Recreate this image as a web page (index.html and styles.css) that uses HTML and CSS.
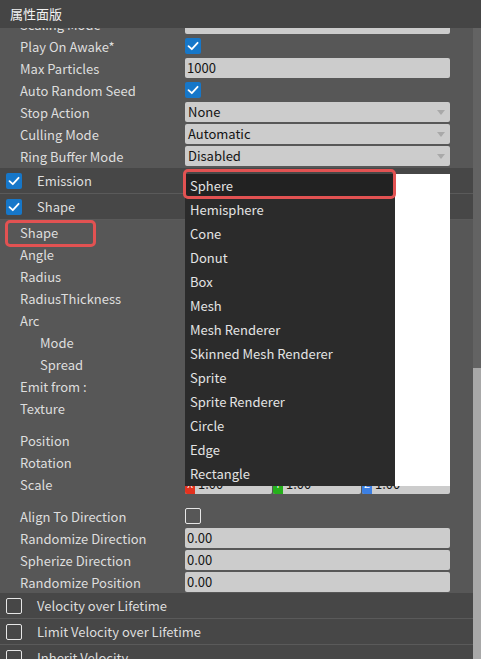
FILE: index.html
```html
<!DOCTYPE html>
<html lang="zh-CN">
<head>
<meta charset="utf-8">
<title>属性面版</title>
<link rel="stylesheet" href="styles.css">
</head>
<body>
<div class="window">
  <div class="titlebar">属性面版</div>
  <div class="viewport">
    <div class="content">
      <div class="scroll-inner">
        <div class="rows">
          <div class="row"><span class="label">Scaling Mode</span><div class="field select"></div></div>
          <div class="row"><span class="label">Play On Awake*</span><div class="value"><span class="check on"><svg viewBox="0 0 16 16"><path d="M3.5 8.2 L6.8 11.2 L12.6 4.8"/></svg></span></div></div>
          <div class="row"><span class="label">Max Particles</span><div class="field">1000</div></div>
          <div class="row"><span class="label">Auto Random Seed</span><div class="value"><span class="check on"><svg viewBox="0 0 16 16"><path d="M3.5 8.2 L6.8 11.2 L12.6 4.8"/></svg></span></div></div>
          <div class="row"><span class="label">Stop Action</span><div class="field select">None</div></div>
          <div class="row"><span class="label">Culling Mode</span><div class="field select">Automatic</div></div>
          <div class="row"><span class="label">Ring Buffer Mode</span><div class="field select">Disabled</div></div>
        </div>
        <div class="section-header"><span class="check on"><svg viewBox="0 0 16 16"><path d="M3.5 8.2 L6.8 11.2 L12.6 4.8"/></svg></span><span class="section-title">Emission</span></div>
        <div class="section-header"><span class="check on"><svg viewBox="0 0 16 16"><path d="M3.5 8.2 L6.8 11.2 L12.6 4.8"/></svg></span><span class="section-title">Shape</span></div>
        <div class="rows shape-rows">
          <div class="row"><span class="label">Shape</span><div class="field select"></div></div>
          <div class="row"><span class="label">Angle</span><div class="field"></div></div>
          <div class="row"><span class="label">Radius</span><div class="field"></div></div>
          <div class="row"><span class="label">RadiusThickness</span><div class="field"></div></div>
          <div class="row"><span class="label">Arc</span><div class="field"></div></div>
          <div class="row"><span class="label indent">Mode</span><div class="field select"></div></div>
          <div class="row"><span class="label indent">Spread</span><div class="field"></div></div>
          <div class="row"><span class="label">Emit from :</span><div class="field select"></div></div>
          <div class="row tall"><span class="label">Texture</span><div class="field"></div></div>
          <div class="group">
            <div class="row"><span class="label">Position</span><div class="vec"><div class="axis"><span class="tag x"></span><span class="num"></span></div><div class="axis"><span class="tag y"></span><span class="num"></span></div><div class="axis"><span class="tag z"></span><span class="num"></span></div></div></div>
            <div class="row"><span class="label">Rotation</span><div class="vec"><div class="axis"><span class="tag x"></span><span class="num"></span></div><div class="axis"><span class="tag y"></span><span class="num"></span></div><div class="axis"><span class="tag z"></span><span class="num"></span></div></div></div>
            <div class="row"><span class="label">Scale</span><div class="vec"><div class="axis"><span class="tag x">X</span><span class="num">1.00</span></div><div class="axis"><span class="tag y">Y</span><span class="num">1.00</span></div><div class="axis"><span class="tag z">Z</span><span class="num">1.00</span></div></div></div>
          </div>
          <div class="row"><span class="label">Align To Direction</span><div class="value"><span class="check off"></span></div></div>
          <div class="row"><span class="label">Randomize Direction</span><div class="field">0.00</div></div>
          <div class="row"><span class="label">Spherize Direction</span><div class="field">0.00</div></div>
          <div class="row"><span class="label">Randomize Position</span><div class="field">0.00</div></div>
        </div>
        <div class="section-header"><span class="check off"></span><span class="section-title">Velocity over Lifetime</span></div>
        <div class="section-header"><span class="check off"></span><span class="section-title">Limit Velocity over Lifetime</span></div>
        <div class="section-header"><span class="check off"></span><span class="section-title">Inherit Velocity</span></div>
      </div>
    </div>
    <div class="scrollbar"><div class="track-top"></div><div class="thumb"></div></div>
  </div>

  <div class="popup-back"></div>
  <ul class="popup">
    <li class="selected">Sphere</li>
    <li>Hemisphere</li>
    <li>Cone</li>
    <li>Donut</li>
    <li>Box</li>
    <li>Mesh</li>
    <li>Mesh Renderer</li>
    <li>Skinned Mesh Renderer</li>
    <li>Sprite</li>
    <li>Sprite Renderer</li>
    <li>Circle</li>
    <li>Edge</li>
    <li>Rectangle</li>
  </ul>
  <div class="mark mark-item"></div>
  <div class="mark mark-label"></div>
</div>
</body>
</html>
```

FILE: styles.css
```css
* { box-sizing: border-box; }
html, body { margin: 0; padding: 0; }
body {
  background: #575757;
  font-family: "Noto Sans CJK SC", "Noto Sans", sans-serif;
  font-size: 13px;
  color: #dedede;
}
.window {
  position: relative;
  width: 481px;
  height: 659px;
  overflow: hidden;
  background: #575757;
}
.titlebar {
  position: relative;
  z-index: 2;
  height: 28px;
  line-height: 28px;
  padding-left: 10px;
  background: #454545;
  color: #f2f2f2;
  font-size: 13px;
}
.viewport {
  display: flex;
  height: 631px;
}
.content {
  flex: 1;
  overflow: hidden;
}
.scroll-inner {
  margin-top: -15px;
}
.rows { padding-bottom: 1px; }
.shape-rows { padding-top: 1px; padding-bottom: 0; }
.row {
  display: grid;
  grid-template-columns: 185px 265px;
  height: 22px;
  align-items: center;
}
.row.tall {
  height: 32px;
  align-items: start;
}
.row.tall .field { margin-top: 1px; height: 30px; }
.group { margin-bottom: 10px; }
.label {
  padding-left: 20px;
  padding-top: 1px;
  white-space: nowrap;
  line-height: 21px;
  height: 22px;
}
.label.indent { padding-left: 40px; }
.value { display: flex; align-items: center; height: 20px; }
.field {
  position: relative;
  height: 20px;
  line-height: 20px;
  background: #cccccc;
  border-radius: 2px;
  color: #141414;
  padding-left: 2px;
  white-space: nowrap;
}
.field.select { padding-left: 3px; }
.field.select::after {
  content: "";
  position: absolute;
  right: 5px;
  top: 8px;
  border-left: 4.5px solid transparent;
  border-right: 4.5px solid transparent;
  border-top: 5px solid #a9a9a9;
}
.check {
  display: inline-block;
  width: 16px;
  height: 16px;
  border-radius: 2px;
  flex: none;
}
.check.on { background: #1677c9; }
.check.on svg { display: block; width: 16px; height: 16px; }
.check.on path { fill: none; stroke: #ffffff; stroke-width: 1.8; stroke-linecap: round; stroke-linejoin: round; }
.check.off { border: 1.5px solid #e6e6e6; }
.section-header {
  display: flex;
  align-items: center;
  height: 26px;
  padding-left: 6px;
  background: #474747;
  border-bottom: 1px solid #5a5a5a;
}
.section-title {
  padding-left: 15px;
  color: #dedede;
}
.vec {
  display: grid;
  grid-template-columns: 87px 88px 88px;
  column-gap: 1px;
  height: 20px;
}
.axis {
  display: flex;
  height: 20px;
  background: #cccccc;
  border-radius: 2px;
  overflow: hidden;
}
.tag {
  width: 10px;
  flex: none;
  color: #fff;
  font-size: 10px;
  line-height: 20px;
  text-align: center;
}
.tag.x { background: #e3321f; }
.tag.y { background: #26b01c; }
.tag.z { background: #3b7fe3; }
.num { color: #141414; line-height: 20px; padding-left: 3px; }
.scrollbar {
  width: 8px;
  display: flex;
  flex-direction: column;
  background: #636363;
}
.track-top { height: 340px; flex: none; }
.thumb { flex: 1; background: #a8a8a8; }
.popup-back {
  position: absolute;
  left: 185px;
  top: 174px;
  width: 265px;
  height: 312px;
  background: #ffffff;
}
.popup {
  position: absolute;
  left: 185px;
  top: 174px;
  width: 210px;
  margin: 0;
  padding: 0;
  list-style: none;
  background: #2b2b2b;
}
.popup li {
  height: 24px;
  line-height: 24px;
  padding-left: 5px;
  color: #e4e4e4;
  white-space: nowrap;
}
.popup li.selected { background: #222222; }
.mark {
  position: absolute;
  border: 3px solid #e25252;
  border-radius: 5px;
}
.mark-item { left: 183px; top: 169px; width: 213px; height: 30px; }
.mark-label { left: 5px; top: 220px; width: 91px; height: 27px; }
```
